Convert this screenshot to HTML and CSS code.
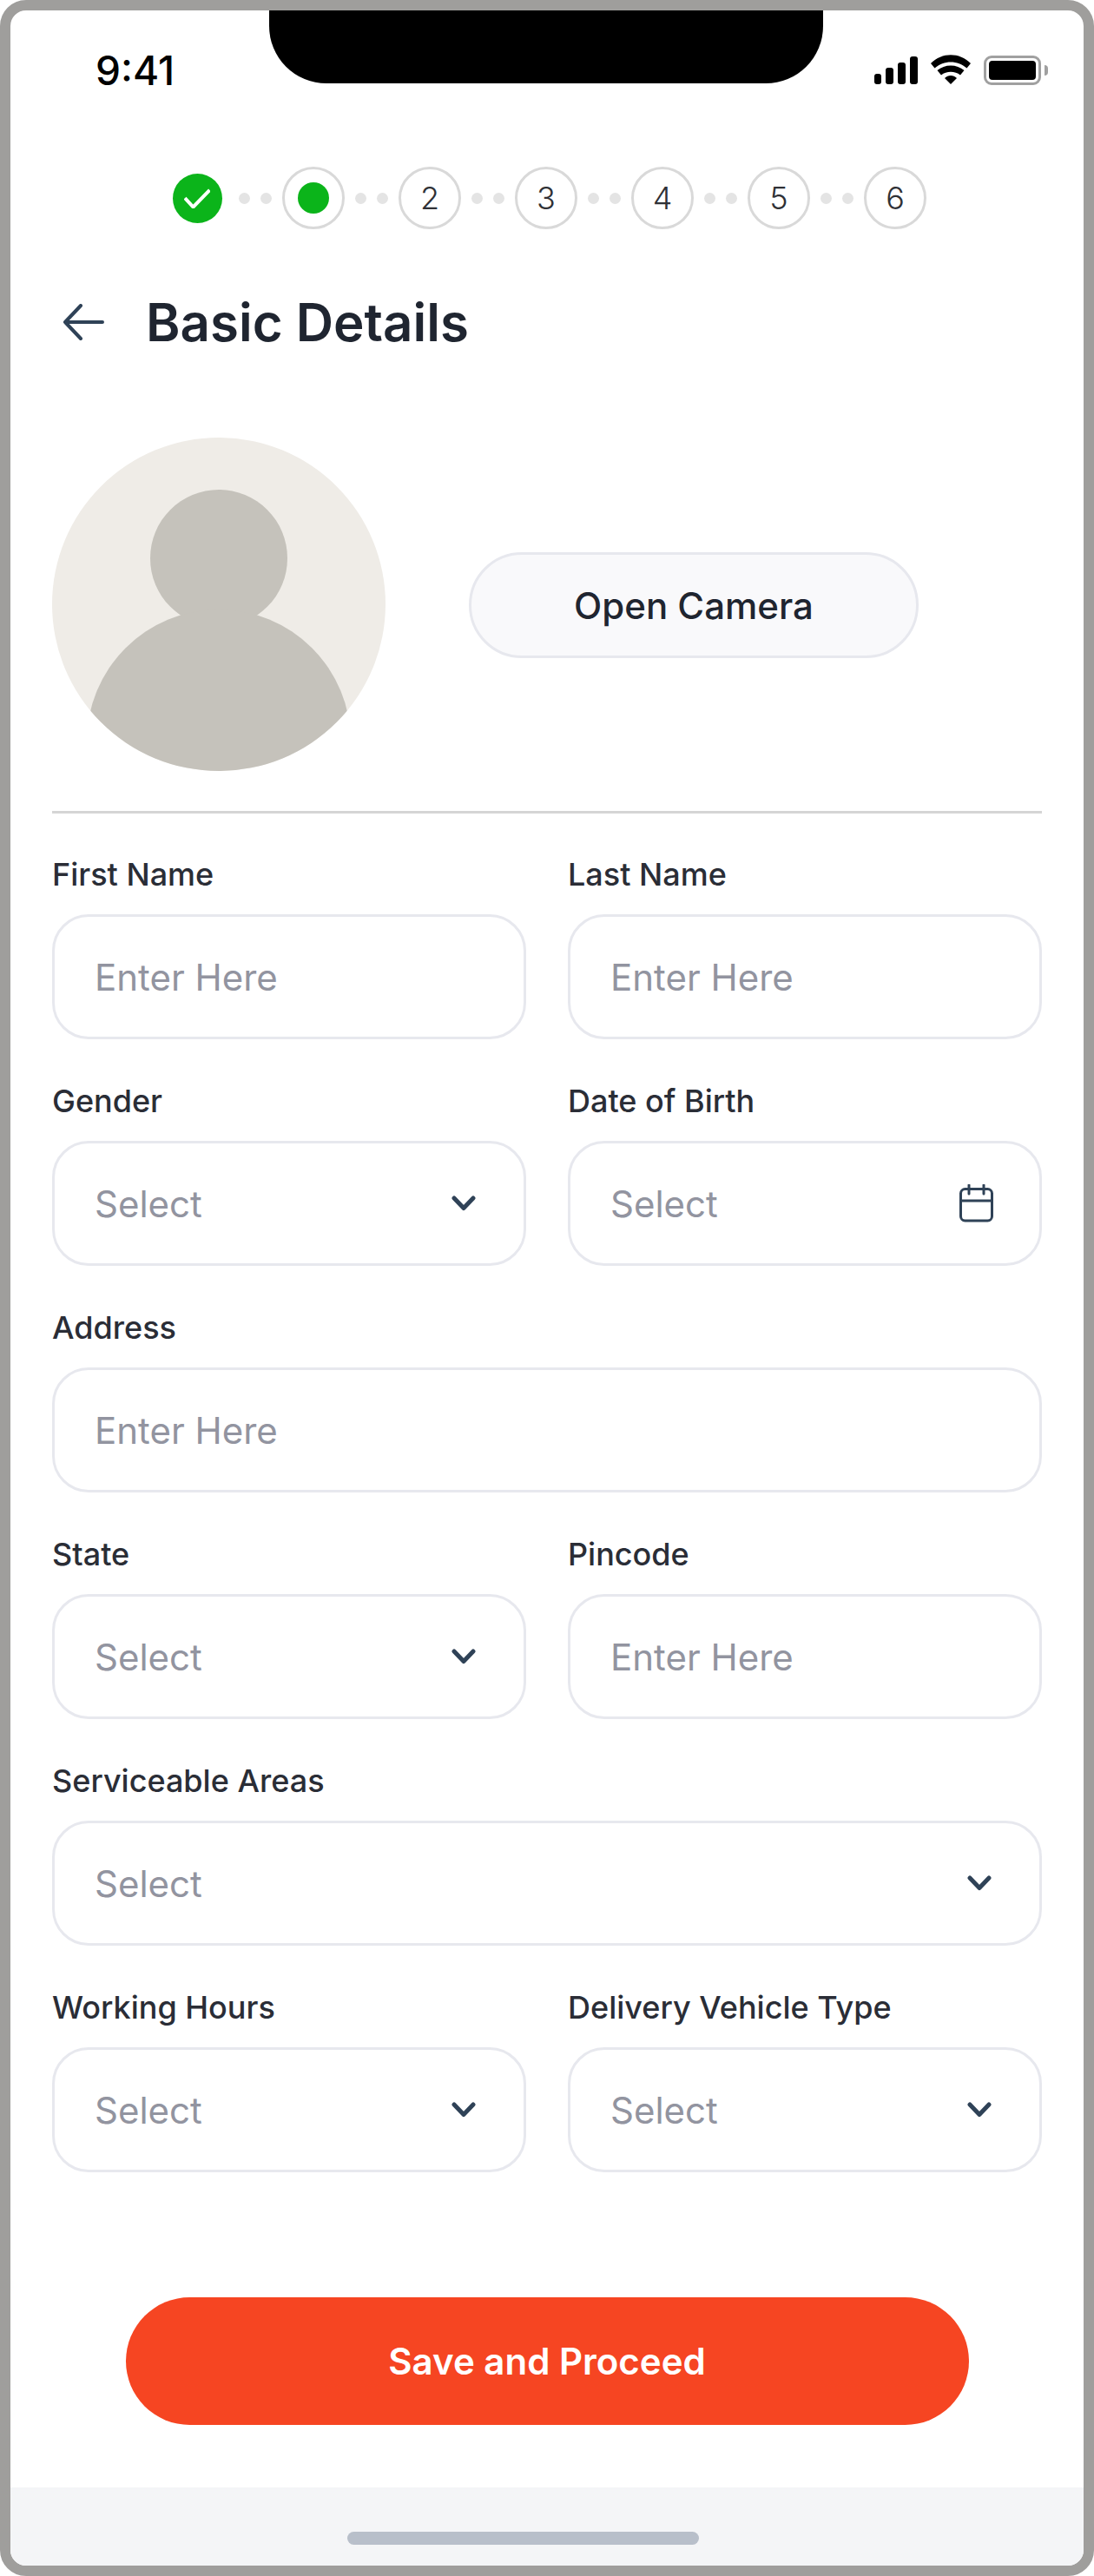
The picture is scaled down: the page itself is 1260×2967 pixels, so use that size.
FILE: index.html
```html
<!DOCTYPE html>
<html lang="en">
<head>
  <meta charset="UTF-8" />
  <title>Basic Details</title>
  <meta name="viewport" content="width=device-width, initial-scale=1.0" />
  <link rel="stylesheet" href="styles.css">
</head>
<body>
  <div class="phone">
    <div class="notch"></div>

    <div class="status-bar">
      <span class="time">9:41</span>
      <div class="status-icons">
        <svg class="signal" width="52" height="32" viewBox="0 0 52 32">
          <rect x="1" y="20" width="8" height="12" rx="3" />
          <rect x="14" y="13" width="9" height="19" rx="3" />
          <rect x="28" y="7" width="9" height="25" rx="3" />
          <rect x="42" y="0" width="9" height="32" rx="3" />
        </svg>
        <svg class="wifi" width="46" height="34" viewBox="0 0 46 34">
          <path d="M0 10C13 -3 33 -3 46 10L41.500 15.500C31 6 15 6 4.500 15.500Z" />
          <path d="M7.500 18C16 10.500 30 10.500 38.500 18L34 23.500C28 18.500 18 18.500 12 23.500Z" />
          <path d="M16 27C20 23 26 23 30 27L23 34Z" />
        </svg>
        <div class="battery"><div class="battery-level"></div></div>
        <div class="battery-nub"></div>
      </div>
    </div>

    <div class="stepper">
      <div class="step">
        <div class="step-done">
          <svg width="30" height="24" viewBox="0 0 30 24"><path d="M1 12L10.500 22.500L29.500 3" /></svg>
        </div>
      </div>
      <span class="dot"></span><span class="dot"></span>
      <div class="step step-ring"><div class="step-current"></div></div>
      <span class="dot"></span><span class="dot"></span>
      <div class="step step-ring">2</div>
      <span class="dot"></span><span class="dot"></span>
      <div class="step step-ring">3</div>
      <span class="dot"></span><span class="dot"></span>
      <div class="step step-ring">4</div>
      <span class="dot"></span><span class="dot"></span>
      <div class="step step-ring">5</div>
      <span class="dot"></span><span class="dot"></span>
      <div class="step step-ring">6</div>
    </div>

    <div class="page-title">
      <svg class="back" width="48" height="42" viewBox="0 0 48 42">
        <path d="M46 21H3M21 2L3 21L21 40" />
      </svg>
      <h1>Basic Details</h1>
    </div>

    <div class="photo-row">
      <svg class="avatar" width="384" height="384" viewBox="0 0 384 384">
        <defs><clipPath id="avatar-clip"><circle cx="192" cy="192" r="192" /></clipPath></defs>
        <circle cx="192" cy="192" r="192" fill="#efece7" />
        <g clip-path="url(#avatar-clip)" fill="#c5c2bb">
          <circle cx="192" cy="139" r="79" />
          <circle cx="192" cy="350" r="152" />
        </g>
      </svg>
      <button class="camera-btn">Open Camera</button>
    </div>

    <div class="divider"></div>

    <form class="form">
      <div class="field">
        <label>First Name</label>
        <div class="control"><span>Enter Here</span></div>
      </div>
      <div class="field">
        <label>Last Name</label>
        <div class="control"><span>Enter Here</span></div>
      </div>
      <div class="field">
        <label>Gender</label>
        <div class="control"><span>Select</span>
          <svg class="chevron" width="30" height="18" viewBox="0 0 30 18"><path d="M4 3L15 14.500L26 3" /></svg>
        </div>
      </div>
      <div class="field">
        <label>Date of Birth</label>
        <div class="control has-date"><span>Select</span>
          <svg class="calendar" width="40" height="44" viewBox="0 0 40 44">
            <rect x="1.500" y="5.500" width="36" height="36.500" rx="5" />
            <path d="M1.500 19H37.500M11 1V11M28 1V11" />
          </svg>
        </div>
      </div>
      <div class="field wide">
        <label>Address</label>
        <div class="control"><span>Enter Here</span></div>
      </div>
      <div class="field">
        <label>State</label>
        <div class="control"><span>Select</span>
          <svg class="chevron" width="30" height="18" viewBox="0 0 30 18"><path d="M4 3L15 14.500L26 3" /></svg>
        </div>
      </div>
      <div class="field">
        <label>Pincode</label>
        <div class="control"><span>Enter Here</span></div>
      </div>
      <div class="field wide">
        <label>Serviceable Areas</label>
        <div class="control"><span>Select</span>
          <svg class="chevron" width="30" height="18" viewBox="0 0 30 18"><path d="M4 3L15 14.500L26 3" /></svg>
        </div>
      </div>
      <div class="field">
        <label>Working Hours</label>
        <div class="control"><span>Select</span>
          <svg class="chevron" width="30" height="18" viewBox="0 0 30 18"><path d="M4 3L15 14.500L26 3" /></svg>
        </div>
      </div>
      <div class="field">
        <label>Delivery Vehicle Type</label>
        <div class="control"><span>Select</span>
          <svg class="chevron" width="30" height="18" viewBox="0 0 30 18"><path d="M4 3L15 14.500L26 3" /></svg>
        </div>
      </div>
    </form>

    <div class="actions">
      <button class="save-btn">Save and Proceed</button>
    </div>

    <div class="home-area"><div class="home-bar"></div></div>
  </div>
</body>
</html>
```

FILE: styles.css
```css
* {
  box-sizing: border-box;
}

html, body {
  margin: 0;
  background: #fff;
}

body {
  font-family: "Inter", sans-serif;
  color: #1f2530;
}

.phone {
  position: relative;
  width: 1260px;
  height: 2967px;
  border: 12px solid #9f9e9c;
  border-radius: 30px;
  background: #fff;
  overflow: hidden;
  display: flex;
  flex-direction: column;
}

.notch {
  position: absolute;
  top: 0;
  left: 298px;
  width: 638px;
  height: 84px;
  background: #000;
  border-radius: 0 0 66px 66px;
}

.status-bar {
  display: flex;
  justify-content: space-between;
  height: 180px;
  padding: 44px 41px 0 98px;
}

.time {
  font-size: 46px;
  font-weight: 500;
  line-height: 50px;
  color: #000;
}

.status-icons {
  display: flex;
  align-items: flex-start;
  height: 36px;
  margin-top: 8px;
}

.signal {
  fill: #000;
  margin-top: 1px;
}

.wifi {
  fill: #000;
  margin: -1px 15px 0 14px;
}

.battery {
  width: 66px;
  height: 34px;
  border: 3px solid #a0a0a0;
  border-radius: 9px;
  padding: 3px;
}

.battery-level {
  height: 100%;
  background: #000;
  border-radius: 4px;
}

.battery-nub {
  width: 4px;
  height: 12px;
  margin: 11px 0 0 4px;
  background: #a0a0a0;
  border-radius: 0 4px 4px 0;
}

.stepper {
  display: flex;
  align-items: center;
  justify-content: center;
  gap: 12px;
  height: 72px;
  margin-right: 2px;
}

.step {
  width: 72px;
  height: 72px;
  display: flex;
  align-items: center;
  justify-content: center;
  font-size: 36px;
  font-weight: 300;
  color: #2f3136;
  border-radius: 50%;
}

.step-ring {
  border: 3px solid #d9d9d9;
}

.step-done {
  width: 57px;
  height: 57px;
  border-radius: 50%;
  background: #0bb41a;
  display: flex;
  align-items: center;
  justify-content: center;
}

.step-done svg {
  fill: none;
  stroke: #fff;
  stroke-width: 4;
}

.step-current {
  width: 36px;
  height: 36px;
  border-radius: 50%;
  background: #0bb41a;
}

.dot {
  width: 13px;
  height: 13px;
  border-radius: 50%;
  background: #e4e4e4;
}

.page-title {
  display: flex;
  align-items: center;
  height: 88px;
  margin-top: 63px;
  padding-left: 60px;
}

.back {
  fill: none;
  stroke: #2f4257;
  stroke-width: 4;
  stroke-linecap: round;
  stroke-linejoin: round;
}

h1 {
  margin: 0 0 0 48px;
  font-size: 60px;
  font-weight: 600;
  line-height: 88px;
  color: #1f2530;
}

.photo-row {
  display: flex;
  align-items: center;
  margin-top: 89px;
  padding-left: 48px;
}

.camera-btn {
  width: 518px;
  height: 122px;
  margin-left: 96px;
  margin-top: 2px;
  border: 3px solid #e7e8ee;
  border-radius: 61px;
  background: #f9f9fb;
  font-family: inherit;
  font-size: 42px;
  font-weight: 450;
  color: #1f2530;
}

.divider {
  height: 3px;
  margin: 46px 48px 0;
  background: #d5d5d5;
}

.form {
  display: grid;
  grid-template-columns: 546px 546px;
  column-gap: 48px;
  row-gap: 49px;
  margin-top: 48px;
  padding: 0 48px;
}

.field.wide {
  grid-column: 1 / 3;
}

.field label {
  display: block;
  height: 68px;
  font-size: 36px;
  font-weight: 450;
  line-height: 44px;
  color: #2a2d36;
}

.control {
  display: flex;
  align-items: center;
  justify-content: space-between;
  height: 144px;
  padding: 0 54px 0 46px;
  border: 3px solid #e7e8ee;
  border-radius: 42px;
  font-size: 42px;
  color: #9294a0;
}

.has-date {
  padding-right: 52px;
}

.chevron {
  fill: none;
  stroke: #2f4257;
  stroke-width: 5;
  stroke-linecap: round;
  stroke-linejoin: round;
}

.calendar {
  fill: none;
  stroke: #2f4257;
  stroke-width: 3;
  stroke-linecap: round;
}

.actions {
  display: flex;
  justify-content: center;
  margin-top: 144px;
}

.save-btn {
  width: 971px;
  height: 147px;
  border: 0;
  border-radius: 74px;
  background: #f64522;
  font-family: inherit;
  font-size: 42px;
  font-weight: 600;
  color: #fff;
}

.home-area {
  display: flex;
  justify-content: center;
  align-items: flex-start;
  flex: 1;
  margin-top: 72px;
  padding: 51px 56px 0 0;
  background: #f4f5f7;
}

.home-bar {
  width: 405px;
  height: 15px;
  border-radius: 8px;
  background: #b8bfca;
}
```
